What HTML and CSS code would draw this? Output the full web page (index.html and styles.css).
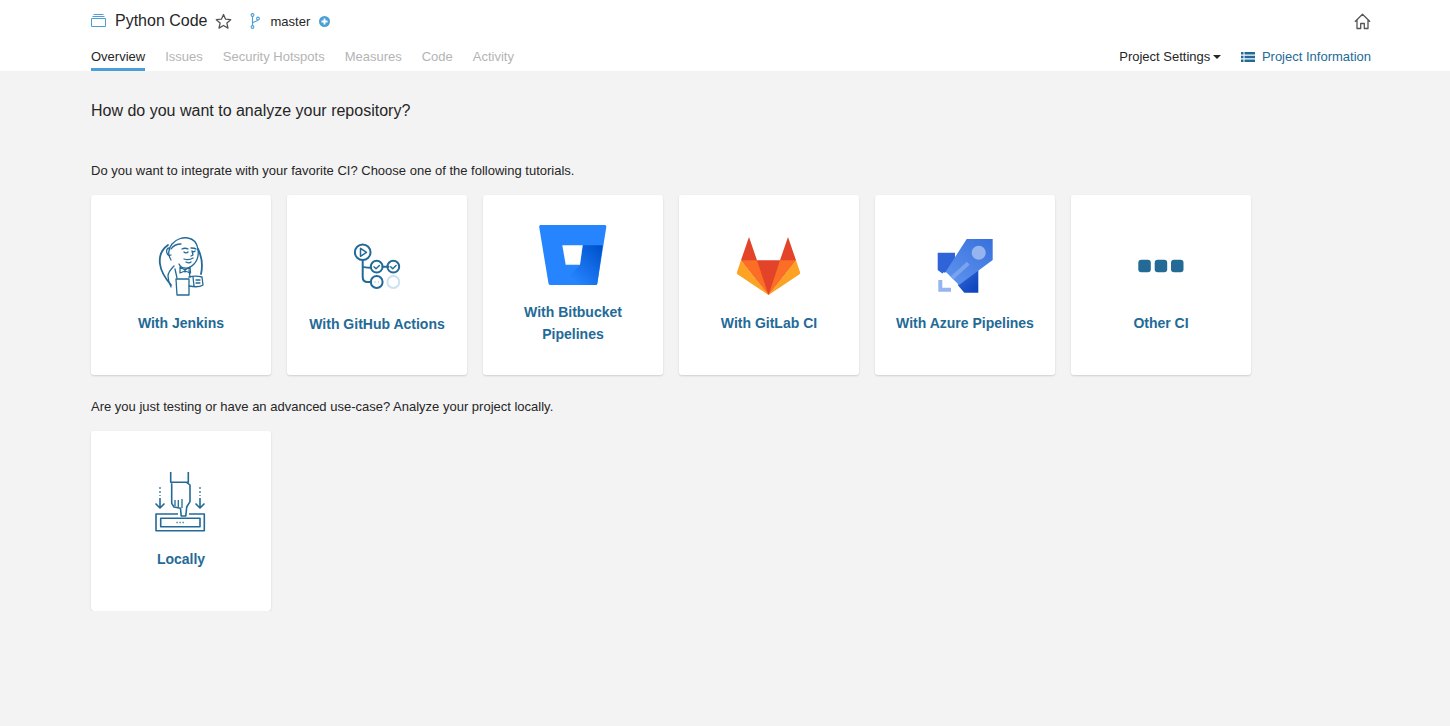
FILE: index.html
```html
<!DOCTYPE html>
<html lang="en">
<head>
    <meta charset="UTF-8">
    <meta name="viewport" content="width=device-width, initial-scale=1.0">
    <title>Python Code - Overview</title>
    <link rel="stylesheet" href="styles.css">
</head>
<body>
    <header class="navbar">
        <div class="navbar-top">
            <svg class="project-icon" width="15" height="14" viewBox="0 0 15 14" fill="none" stroke="#4b9fd5">
                <path d="M2.500 .5h10M1.500 2.500h12M.5 4.500h14v8H.5z"/>
            </svg>
            <span class="project-name">Python Code</span>
            <svg class="star-icon" width="17" height="17" viewBox="0 0 17 17" fill="none" stroke="#555" stroke-width="1.300" stroke-linejoin="round">
                <path d="M8.500 1.500l2.100 4.700 5.100.5-3.800 3.400 1.100 5-4.500-2.600-4.500 2.600 1.100-5L1.300 6.700l5.100-.5z"/>
            </svg>
            <svg class="branch-icon" width="10" height="16" viewBox="0 0 10 16" fill="none" stroke="#4b9fd5" stroke-width="1.100">
                <circle cx="2.500" cy="2" r="1.400"/>
                <circle cx="2.500" cy="14" r="1.400"/>
                <circle cx="8" cy="5.500" r="1.400"/>
                <path d="M2.500 3.400v9.200M2.500 10.500c0-2.500 5.500-1.500 5.500-3.700"/>
            </svg>
            <span class="branch-name">master</span>
            <svg class="plus-icon" width="11" height="11" viewBox="0 0 11 11">
                <circle cx="5.500" cy="5.500" r="5.500" fill="#4b9fd5"/>
                <path d="M5.500 2.500v6M2.500 5.500h6" stroke="#fff" stroke-width="1.800"/>
            </svg>
            <svg class="home-icon" width="17" height="17" viewBox="0 0 17 17" fill="none" stroke="#555" stroke-width="1.300" stroke-linejoin="round">
                <path d="M.9 8.800L8.500 1.300l7.600 7.500M3 7v8.500h3.700v-5h3.600v5H14V7"/>
            </svg>
        </div>
        <nav class="navbar-tabs">
            <a class="tab tab-active">Overview</a>
            <a class="tab">Issues</a>
            <a class="tab">Security Hotspots</a>
            <a class="tab">Measures</a>
            <a class="tab">Code</a>
            <a class="tab">Activity</a>
            <a class="project-settings">Project Settings<span class="caret"></span></a>
            <a class="project-info">
                <svg width="14" height="10" viewBox="0 0 14 10" fill="#236a97">
                    <path d="M0 0h2.500v2.500H0zM3.500 0H14v2.500H3.500zM0 3.750h2.500v2.500H0zM3.500 3.750H14v2.500H3.500zM0 7.500h2.500V10H0zM3.500 7.500H14V10H3.500z"/>
                </svg>
                Project Information
            </a>
        </nav>
    </header>

    <main class="page">
        <h1>How do you want to analyze your repository?</h1>

        <p class="intro intro-ci">Do you want to integrate with your favorite CI? Choose one of the following tutorials.</p>
        <div class="card-row">
            <a class="card">
                <svg width="60" height="60" viewBox="0 0 60 60" fill="none" stroke="#236a97" stroke-width="1.300" stroke-linecap="round" stroke-linejoin="round">
                    <path d="M17 9C10 14 8 21 9 28c.8 7 5 14 11 21M47 13c4 8 5 16 3 25" stroke-width="1.800"/>
                    <path d="M20 24c-3-5-3-11 1-16 4-5 11-7 16-6 6 1 9 5 10 11 .8 6-1 12-4 15-3 3-6 5-9 4-3 0-5-2-6-4"/>
                    <path d="M18 12c-2 0-3 3-2 5 .5 2 2 3 4 2M20 13c2-3 6-5 10-5"/>
                    <path d="M31 13c2-1 4-1 6 0M40 12c2 0 4 0 5 1M33 16c1 1 3 1 4 0M41 15c1 1 2 1 3 0M41 15l1 4-2 1"/>
                    <path d="M33 23c3 1 6 1 9-1M35 26c2 1 4 1 5 0"/>
                    <path d="M23 30c-3 3-6 6-6 10 0 4 1 7 3 11M24 33l2 9M38 34l1 7"/>
                    <path d="M29 31l5 3 5-3 .5 6-5.500-2-5 2zM34 34v2"/>
                    <path d="M25 43h13v16H26z"/>
                    <path d="M38 41c4-1 9-1 13 0l1 8c-3 2-9 2-14 1M42 41l1 9M45 44h4M45 47h4"/>
                </svg>
                <span class="card-title">With Jenkins</span>
            </a>
            <a class="card">
                <svg width="60" height="62" viewBox="0 0 60 62" fill="none" stroke="#236a97" stroke-width="2" stroke-linecap="round" stroke-linejoin="round">
                    <circle cx="15.700" cy="17.300" r="7.800"/>
                    <path d="M13.500 13.300v8l6-4z" stroke-width="1.500"/>
                    <path d="M15.700 25v17c0 3 2 5 5 5h3.500M15.700 31c0 1 2 1.700 8.500 1.700M35.500 31.700h6"/>
                    <circle cx="29.700" cy="31.700" r="5.900"/>
                    <circle cx="46.300" cy="31.700" r="5.900"/>
                    <path d="M27 31.800l2 2 3.400-3.400M43.700 31.800l2 2 3.400-3.400" stroke-width="1.400"/>
                    <circle cx="29.700" cy="47" r="5.900"/>
                    <circle cx="46.300" cy="47" r="5.900" stroke="#cbe2f1"/>
                    <path d="M28 47h.1M31.400 47h.1" stroke="#a9c8dc" stroke-width="1.300"/>
                </svg>
                <span class="card-title">With GitHub Actions</span>
            </a>
            <a class="card">
                <svg width="68" height="60" viewBox="0 0 68 60">
                    <defs>
                        <linearGradient id="bitbucket-shade" x1="1" y1="0.100" x2="0.250" y2="0.800">
                            <stop offset="0" stop-color="#0052cc"/>
                            <stop offset="1" stop-color="#2684ff"/>
                        </linearGradient>
                    </defs>
                    <path d="M2 0h63.500c1.200 0 2 .8 1.800 2l-9 56.500c-.2 1-1 1.500-2 1.500H11.500c-1 0-1.800-.6-2-1.500L.2 2C0 .8.800 0 2 0z" fill="#2684ff"/>
                    <path d="M43.700 20.300h20l-5.400 38.200c-.2 1-1 1.500-2 1.500H20l21-19.500z" fill="url(#bitbucket-shade)"/>
                    <path d="M23.300 20.300h20.400L41 39.700H26.700z" fill="#fff"/>
                </svg>
                <span class="card-title">With Bitbucket Pipelines</span>
            </a>
            <a class="card">
                <svg width="66" height="60" viewBox="0 0 66 60">
                    <path d="M32.500 59L5 24.300 13 1l8 23.300h23L52 1l8 23.300z" fill="#e24329"/>
                    <path d="M32.500 59L21 24.300H5z" fill="#fc6d26"/>
                    <path d="M32.500 59L44 24.300h16z" fill="#fc6d26"/>
                    <path d="M5 24.300L1 36c-.3 1 0 2 .8 2.600L32.500 59z" fill="#fca326"/>
                    <path d="M60 24.300L64 36c.3 1 0 2-.8 2.600L32.500 59z" fill="#fca326"/>
                </svg>
                <span class="card-title">With GitLab CI</span>
            </a>
            <a class="card">
                <svg width="60" height="60" viewBox="0 0 60 60">
                    <defs>
                        <linearGradient id="azure-wing" x1="0" y1="0" x2="0.700" y2="1">
                            <stop offset="0" stop-color="#3d70dc"/>
                            <stop offset="1" stop-color="#0f46bd"/>
                        </linearGradient>
                        <linearGradient id="azure-body" x1="0.900" y1="0" x2="0.100" y2="1">
                            <stop offset="0" stop-color="#3a72dd"/>
                            <stop offset="1" stop-color="#5e94ee"/>
                        </linearGradient>
                    </defs>
                    <path d="M2.700 16.700H20V30L8 38l-5.300-4z" fill="#2f63d8"/>
                    <path d="M43.300 26v30.700H29.300L22.700 49z" fill="url(#azure-wing)"/>
                    <path d="M31.700 3h26v21L24 49 10.700 35.700z" fill="url(#azure-body)"/>
                    <circle cx="43.700" cy="16.700" r="7" fill="#96b4f0"/>
                    <path d="M33.300 27.300L17 42" stroke="#7ba2ee" stroke-width="4"/>
                    <path d="M8 37l15 15" stroke="#fff" stroke-width="2.500"/>
                    <path d="M5.300 44v9.700H16" fill="none" stroke="#96b4f0" stroke-width="4"/>
                </svg>
                <span class="card-title">With Azure Pipelines</span>
            </a>
            <a class="card">
                <svg width="60" height="60" viewBox="0 0 60 60" fill="#236a97">
                    <rect x="7.300" y="23.700" width="12.500" height="12.500" rx="3"/>
                    <rect x="23.700" y="23.700" width="12.500" height="12.500" rx="3"/>
                    <rect x="40" y="23.700" width="12.500" height="12.500" rx="3"/>
                </svg>
                <span class="card-title">Other CI</span>
            </a>
        </div>

        <p class="intro intro-local">Are you just testing or have an advanced use-case? Analyze your project locally.</p>
        <div class="card-row">
            <a class="card">
                <svg width="60" height="60" viewBox="0 0 60 60" fill="none" stroke="#236a97" stroke-width="1.600" stroke-linejoin="round">
                    <path d="M19.700 0v10.300h17.600V0"/>
                    <path d="M34 6h.1" stroke-width="1.400"/>
                    <path d="M20.700 11.300v20l2.300 3.700 6.500 1.300.7 7.700h4.600l.9-9 3.300-5.300V13l-3.300-2.700"/>
                    <path d="M24 28v6M27.300 28v7M31 27v9" stroke-width="1.300"/>
                    <path d="M9 15v2M9 19v2M9 23v1M49 15v2M49 19v2M49 23v1" stroke-width="1.200"/>
                    <path d="M9 26v10M4.500 31.500L9 36l4.500-4.500M49 26v10M44.500 31.500L49 36l4.500-4.500"/>
                    <path d="M27 42H5v16.700h48.300V42H38"/>
                    <path d="M9.700 46.300H49v8.400H9.700z"/>
                    <path d="M25.500 50.500h1.200M28.500 50.500h1.200M31.500 50.500h1.200" stroke-width="1.400"/>
                </svg>
                <span class="card-title">Locally</span>
            </a>
        </div>
    </main>
</body>
</html>
```

FILE: styles.css
```css
body {
    font-family: "Liberation Sans", Arial, sans-serif;
    font-size: 13px;
    color: #262626;
    background-color: #f3f3f3;
    margin: 0;
    padding: 0;
}
a {
    cursor: pointer;
}
.navbar {
    background-color: #fff;
    height: 71px;
    padding: 0 79px 0 91px;
    box-sizing: border-box;
}
.navbar-top {
    display: flex;
    align-items: center;
    height: 42px;
}
.project-icon {
    margin-right: 9px;
}
.project-name {
    font-size: 16px;
    margin-right: 7px;
}
.star-icon {
    margin-right: 18px;
}
.branch-icon {
    margin-right: 11px;
}
.branch-name {
    margin-right: 9px;
}
.home-icon {
    margin-left: auto;
}
.navbar-tabs {
    display: flex;
    align-items: flex-start;
    height: 29px;
    line-height: 29px;
}
.tab {
    color: #b4b4b4;
    margin-right: 20px;
    height: 26px;
}
.tab-active {
    color: #262626;
    border-bottom: 3px solid #4b9fd5;
}
.project-settings {
    margin-left: auto;
    margin-right: 20px;
}
.caret {
    display: inline-block;
    border-top: 4px solid #262626;
    border-left: 4px solid transparent;
    border-right: 4px solid transparent;
    margin-left: 3px;
    vertical-align: 2px;
}
.project-info {
    color: #236a97;
}
.project-info svg {
    margin-right: 3px;
    vertical-align: -1px;
}
.page {
    padding: 0 91px;
}
h1 {
    font-size: 16px;
    font-weight: normal;
    line-height: 24px;
    margin: 28px 0 0;
}
.intro {
    line-height: 16px;
    margin: 0 0 16px;
}
.intro-ci {
    margin-top: 40px;
}
.intro-local {
    margin-top: 24px;
}
.card-row {
    display: flex;
    gap: 16px;
}
.card {
    display: flex;
    flex-direction: column;
    align-items: center;
    justify-content: center;
    width: 180px;
    height: 180px;
    box-sizing: border-box;
    padding: 0 16px;
    background-color: #fff;
    border-radius: 3px;
    box-shadow: 0 1px 2px rgba(0, 0, 0, 0.15);
    text-align: center;
}
.card svg {
    flex: none;
    margin-bottom: 16px;
}
.card-title {
    color: #236a97;
    font-size: 14px;
    font-weight: bold;
    line-height: 22px;
}
```
